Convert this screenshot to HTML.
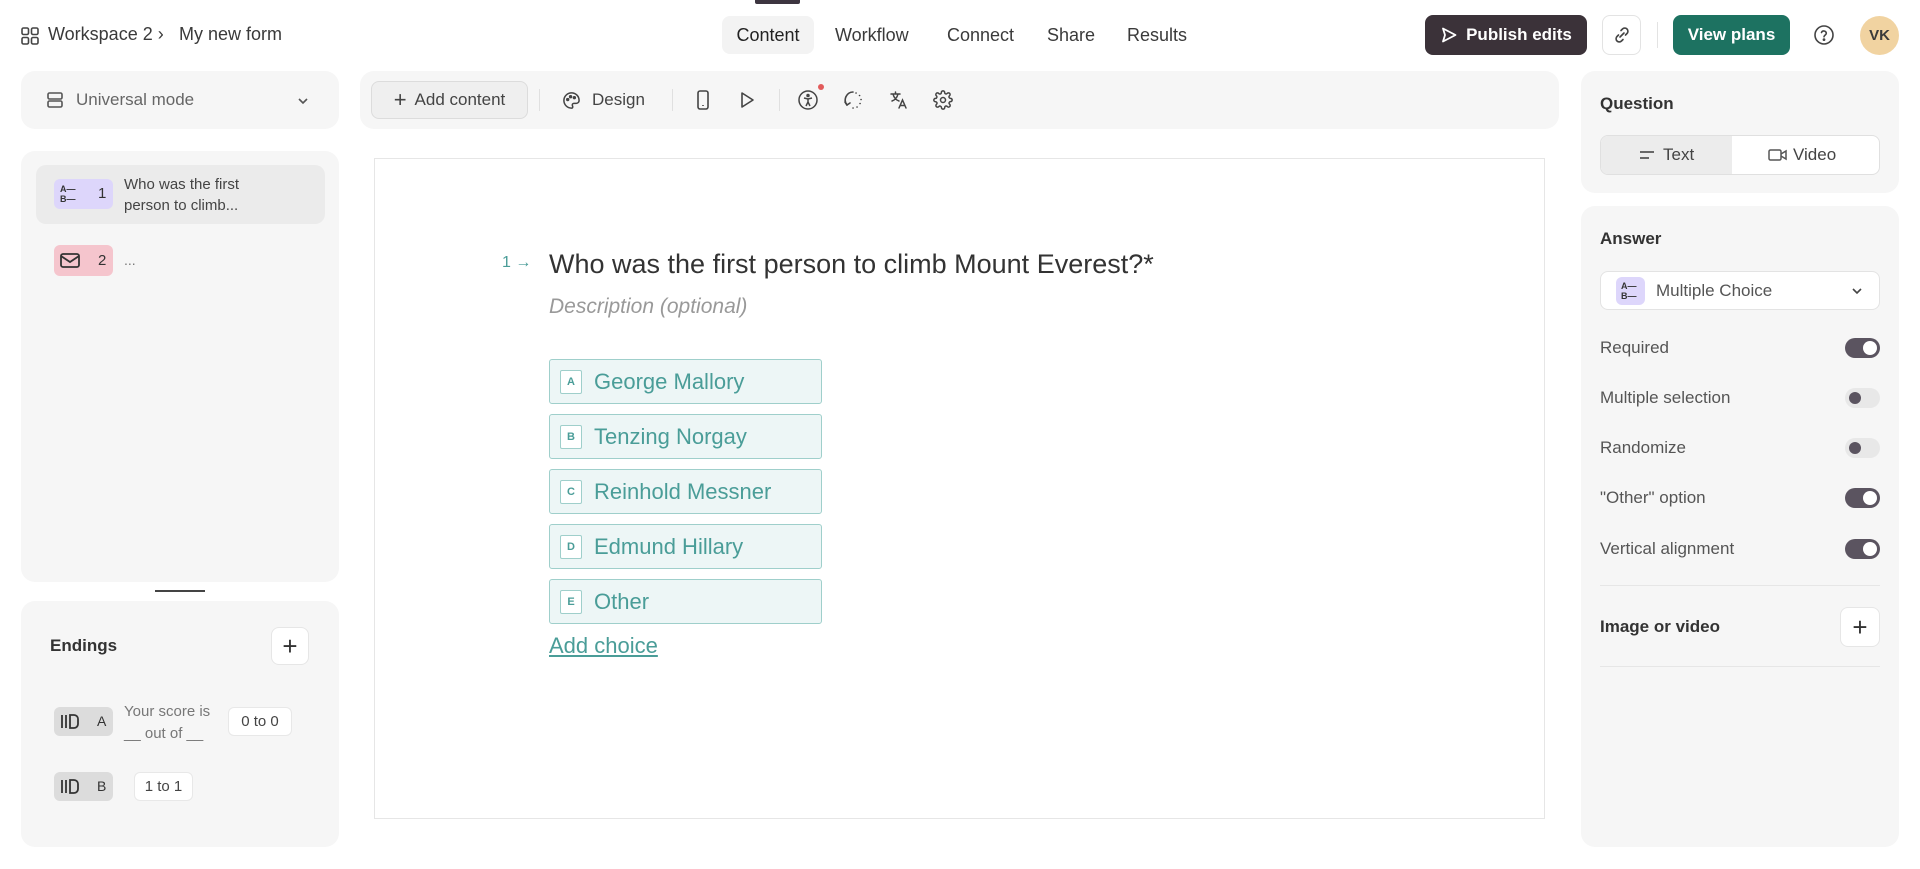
<!DOCTYPE html>
<html><head><meta charset="utf-8"><style>
*{box-sizing:border-box;margin:0;padding:0}
body{width:1920px;height:869px;background:#fff;font-family:"Liberation Sans",sans-serif;color:#3a3a3a;position:relative;overflow:hidden}
.a{position:absolute}
.panel{position:absolute;background:#f6f6f6;border-radius:14px}
.tab{position:absolute;top:16px;height:38px;line-height:38px;font-size:18px;color:#3a3a3a}
.btn{position:absolute;border-radius:8px;display:flex;align-items:center;justify-content:center;font-size:17px}
.ch{position:absolute;left:549px;width:273px;height:45px;background:#edf6f6;border:1px solid #9fcfcb;border-radius:3px;color:#4a9d98;font-size:22px;line-height:43px;padding-left:44px}
.ch b{position:absolute;left:10px;top:10px;width:22px;height:24px;background:#fff;border:1px solid #9fcfcb;border-radius:2px;font-size:11px;line-height:22px;text-align:center;color:#4a9d98;font-weight:bold}
.row{position:absolute;left:1600px;font-size:17px;color:#555}
.tg{position:absolute;left:1845px;width:35px;height:20px;border-radius:10px}
.on{background:#5b5460}.on:after{content:"";position:absolute;right:3px;top:3px;width:14px;height:14px;border-radius:50%;background:#fff}
.off{background:#e8e8e8}.off:after{content:"";position:absolute;left:4px;top:4px;width:12px;height:12px;border-radius:50%;background:#5b5460}
svg{display:block}
</style></head><body>
<svg class="a" style="left:21px;top:27px" width="18" height="18" viewBox="0 0 18 18" fill="none" stroke="#444" stroke-width="1.6"><rect x="1" y="1" width="6.5" height="6.5" rx="1.5"/><rect x="10.5" y="1" width="6.5" height="6.5" rx="1.5"/><rect x="1" y="10.5" width="6.5" height="6.5" rx="1.5"/><rect x="10.5" y="10.5" width="6.5" height="6.5" rx="1.5"/></svg>
<div class="a" style="left:48px;top:24px;font-size:18px;color:#3a3a3a">Workspace 2 ›</div>
<div class="a" style="left:179px;top:24px;font-size:18px;color:#3a3a3a">My new form</div>
<div class="a" style="left:755px;top:0;width:45px;height:4px;background:#3d3540;border-radius:0 0 2px 2px"></div>
<div class="tab" style="left:722px;width:92px;background:#f3f3f3;border-radius:8px;text-align:center;color:#222">Content</div>
<div class="tab" style="left:835px">Workflow</div>
<div class="tab" style="left:947px">Connect</div>
<div class="tab" style="left:1047px">Share</div>
<div class="tab" style="left:1127px">Results</div>
<div class="btn" style="left:1425px;top:15px;width:162px;height:40px;background:#3b3239;color:#fff;font-weight:bold">
<svg width="18" height="18" viewBox="0 0 18 18" fill="none" stroke="#fff" stroke-width="1.8" style="margin-right:8px"><path d="M3 2.5L15.5 9 3 15.5 5 9z" stroke-linejoin="round"/></svg>Publish edits</div>
<div class="btn" style="left:1602px;top:15px;width:39px;height:40px;border:1px solid #e3e3e3;background:#fff">
<svg width="18" height="18" viewBox="0 0 18 18" fill="none" stroke="#444" stroke-width="1.6" stroke-linecap="round"><path d="M8 4.5l1.5-1.5a3 3 0 014.5 4.5L12.5 9M10 13.5L8.5 15a3 3 0 01-4.5-4.5L5.5 9M7 11l4-4"/></svg></div>
<div class="a" style="left:1657px;top:22px;width:1px;height:26px;background:#e3e3e3"></div>
<div class="btn" style="left:1673px;top:15px;width:117px;height:40px;background:#1d7261;color:#fff;font-weight:bold">View plans</div>
<svg class="a" style="left:1813px;top:24px" width="22" height="22" viewBox="0 0 22 22" fill="none" stroke="#444" stroke-width="1.6"><circle cx="11" cy="11" r="9"/><path d="M8.5 8.5a2.5 2.5 0 014.8.8c0 1.7-2.3 2-2.3 3.5" stroke-linecap="round"/><circle cx="11" cy="15.6" r=".6" fill="#444"/></svg>
<div class="a" style="left:1860px;top:16px;width:39px;height:39px;border-radius:50%;background:#f1d3a1;font-size:15px;font-weight:bold;color:#3a3a3a;text-align:center;line-height:39px">VK</div>

<div class="panel" style="left:21px;top:71px;width:318px;height:58px"></div>
<svg class="a" style="left:46px;top:91px" width="18" height="18" viewBox="0 0 18 18" fill="none" stroke="#555" stroke-width="1.6"><rect x="2" y="2" width="14" height="6" rx="1.5"/><rect x="2" y="10" width="14" height="6" rx="1.5"/></svg>
<div class="a" style="left:76px;top:90px;font-size:17px;color:#666">Universal mode</div>
<svg class="a" style="left:296px;top:94px" width="14" height="14" viewBox="0 0 14 14" fill="none" stroke="#555" stroke-width="1.6"><path d="M3 5l4 4 4-4"/></svg>

<div class="panel" style="left:360px;top:71px;width:1199px;height:58px"></div>
<div class="btn" style="left:371px;top:81px;width:157px;height:38px;background:#efefef;border:1px solid #dcdcdc;color:#444"><span style="font-size:22px;margin-right:8px;font-weight:300">+</span>Add content</div>
<div class="a" style="left:539px;top:89px;width:1px;height:22px;background:#e0e0e0"></div>
<svg class="a" style="left:562px;top:91px" width="19" height="19" viewBox="0 0 20 20" fill="none" stroke="#444" stroke-width="1.6"><path d="M10 2a8 8 0 000 16c1.5 0 1.5-1.5 1-2.5s0-2.5 1.5-2.5H15a3 3 0 003-3C18 5.5 14.5 2 10 2z"/><circle cx="6" cy="9" r="1" fill="#444"/><circle cx="9" cy="6" r="1" fill="#444"/><circle cx="13" cy="7" r="1" fill="#444"/></svg>
<div class="a" style="left:592px;top:90px;font-size:17px;color:#444">Design</div>
<div class="a" style="left:672px;top:89px;width:1px;height:22px;background:#e0e0e0"></div>
<svg class="a" style="left:693px;top:89px" width="20" height="22" viewBox="0 0 20 22" fill="none" stroke="#444" stroke-width="1.6"><rect x="5" y="2" width="10" height="18" rx="2"/><path d="M10 16v1"/></svg>
<svg class="a" style="left:737px;top:90px" width="20" height="20" viewBox="0 0 20 20" fill="none" stroke="#444" stroke-width="1.6"><path d="M5 3l11 7-11 7z" stroke-linejoin="round"/></svg>
<div class="a" style="left:779px;top:89px;width:1px;height:22px;background:#e0e0e0"></div>
<svg class="a" style="left:797px;top:89px" width="22" height="22" viewBox="0 0 22 22" fill="none" stroke="#444" stroke-width="1.5"><circle cx="11" cy="11" r="9"/><circle cx="11" cy="6.5" r="1" fill="#444"/><path d="M7 9l4 1 4-1M11 10v3l-2 4M11 13l2 4"/></svg>
<div class="a" style="left:818px;top:84px;width:6px;height:6px;border-radius:50%;background:#e25b5b"></div>
<svg class="a" style="left:843px;top:90px" width="21" height="21" viewBox="0 0 21 21" fill="none" stroke="#444" stroke-width="1.6" stroke-linecap="round"><path d="M10 2a8 8 0 00-6 13" /><path d="M2 12l2 3 3-2"/><path d="M13 3l.1 0M16.5 5.5l.1 0M18 9.5l.1 0M17 13.5l.1 0M14 17l.1 0M10 18l.1 0"/></svg>
<svg class="a" style="left:889px;top:90px" width="20" height="20" viewBox="0 0 20 20" fill="none" stroke="#444" stroke-width="1.5" stroke-linecap="round"><path d="M2 4h9M6.5 2v2M4 4c1 4 3 6 6 7M9 4c-1 4-3 6-6 7M10 18l3.5-8 3.5 8M11.2 15.5h4.6"/></svg>
<svg class="a" style="left:933px;top:90px" width="20" height="20" viewBox="0 0 24 24" fill="none" stroke="#444" stroke-width="1.8"><circle cx="12" cy="12" r="3"/><path d="M19.4 15a1.7 1.7 0 00.3 1.8l.1.1a2 2 0 11-2.8 2.8l-.1-.1a1.7 1.7 0 00-1.8-.3 1.7 1.7 0 00-1 1.5V21a2 2 0 11-4 0v-.1a1.7 1.7 0 00-1.1-1.5 1.7 1.7 0 00-1.8.3l-.1.1a2 2 0 11-2.8-2.8l.1-.1a1.7 1.7 0 00.3-1.8 1.7 1.7 0 00-1.5-1H3a2 2 0 110-4h.1a1.7 1.7 0 001.5-1.1 1.7 1.7 0 00-.3-1.8l-.1-.1a2 2 0 112.8-2.8l.1.1a1.7 1.7 0 001.8.3H9a1.7 1.7 0 001-1.5V3a2 2 0 114 0v.1a1.7 1.7 0 001 1.5 1.7 1.7 0 001.8-.3l.1-.1a2 2 0 112.8 2.8l-.1.1a1.7 1.7 0 00-.3 1.8V9a1.7 1.7 0 001.5 1H21a2 2 0 110 4h-.1a1.7 1.7 0 00-1.5 1z"/></svg>

<div class="panel" style="left:1581px;top:71px;width:318px;height:122px"></div>
<div class="a" style="left:1600px;top:94px;font-size:17px;font-weight:bold;color:#333">Question</div>
<div class="a" style="left:1600px;top:135px;width:280px;height:40px;border:1px solid #e0e0e0;border-radius:8px;background:#fff;overflow:hidden">
<div class="a" style="left:0;top:0;width:131px;height:38px;background:#ececec"></div>
<svg class="a" style="left:38px;top:13px" width="16" height="12" viewBox="0 0 16 12" stroke="#555" stroke-width="1.8"><path d="M1 3h14M1 9h9"/></svg>
<div class="a" style="left:62px;top:9px;font-size:17px;color:#444">Text</div>
<svg class="a" style="left:167px;top:10px" width="20" height="18" viewBox="0 0 20 18" fill="none" stroke="#555" stroke-width="1.5"><rect x="1" y="4" width="12" height="10" rx="1.5"/><path d="M13 8l5-3v8l-5-3"/></svg>
<div class="a" style="left:192px;top:9px;font-size:17px;color:#444">Video</div>
</div>

<div class="panel" style="left:21px;top:151px;width:318px;height:431px"></div>
<div class="a" style="left:36px;top:165px;width:289px;height:59px;background:#ebebeb;border-radius:10px"></div>
<div class="a" style="left:54px;top:179px;width:59px;height:30px;background:#ddd6fb;border-radius:6px"></div>
<div class="a" style="left:60px;top:184px;font-size:9px;font-weight:bold;line-height:10px;color:#333">A—<br>B—</div>
<div class="a" style="left:98px;top:185px;font-size:15px;color:#333">1</div>
<div class="a" style="left:124px;top:174px;font-size:15px;line-height:21px;color:#444">Who was the first<br>person to climb...</div>
<div class="a" style="left:54px;top:245px;width:59px;height:31px;background:#f5c5cd;border-radius:6px"></div>
<svg class="a" style="left:59px;top:252px" width="22" height="17" viewBox="0 0 22 17" fill="none" stroke="#333" stroke-width="1.8"><rect x="2" y="2" width="18" height="13" rx="2"/><path d="M2 4l9 6 9-6"/></svg>
<div class="a" style="left:98px;top:252px;font-size:15px;color:#333">2</div>
<div class="a" style="left:124px;top:252px;font-size:14px;color:#777">...</div>
<div class="a" style="left:155px;top:590px;width:50px;height:2px;background:#444"></div>

<div class="panel" style="left:21px;top:601px;width:318px;height:246px"></div>
<div class="a" style="left:50px;top:636px;font-size:17px;font-weight:bold;color:#333">Endings</div>
<div class="btn" style="left:271px;top:627px;width:38px;height:38px;background:#fff;border:1px solid #e6e6e6;font-size:26px;font-weight:300;color:#333">+</div>
<div class="a" style="left:54px;top:707px;width:59px;height:29px;background:#dcdcdc;border-radius:6px"></div>
<svg class="a" style="left:60px;top:713px" width="20" height="17" viewBox="0 0 20 17" fill="none" stroke="#333" stroke-width="1.8"><path d="M2 2v13M6 2v13M10 2h4a4 4 0 014 4v5a4 4 0 01-4 4h-4z"/></svg>
<div class="a" style="left:97px;top:713px;font-size:14px;color:#333">A</div>
<div class="a" style="left:124px;top:701px;font-size:15px;line-height:22px;color:#777">Your score is<br>__ out of __</div>
<div class="a" style="left:228px;top:707px;width:64px;height:29px;background:#fff;border:1px solid #e8e8e8;border-radius:6px;font-size:15px;text-align:center;line-height:27px;color:#444">0 to 0</div>
<div class="a" style="left:54px;top:772px;width:59px;height:29px;background:#dcdcdc;border-radius:6px"></div>
<svg class="a" style="left:60px;top:778px" width="20" height="17" viewBox="0 0 20 17" fill="none" stroke="#333" stroke-width="1.8"><path d="M2 2v13M6 2v13M10 2h4a4 4 0 014 4v5a4 4 0 01-4 4h-4z"/></svg>
<div class="a" style="left:97px;top:778px;font-size:14px;color:#333">B</div>
<div class="a" style="left:134px;top:772px;width:59px;height:29px;background:#fff;border:1px solid #e8e8e8;border-radius:6px;font-size:15px;text-align:center;line-height:27px;color:#444">1 to 1</div>

<div class="a" style="left:374px;top:158px;width:1171px;height:661px;border:1px solid #e6e6e6;background:#fff"></div>
<div class="a" style="left:502px;top:254px;font-size:16px;color:#4a9d98">1 →</div>
<div class="a" style="left:549px;top:249px;font-size:27px;color:#333">Who was the first person to climb Mount Everest?*</div>
<div class="a" style="left:549px;top:295px;font-size:21px;font-style:italic;color:#999">Description (optional)</div>
<div class="ch" style="top:359px"><b>A</b>George Mallory</div>
<div class="ch" style="top:414px"><b>B</b>Tenzing Norgay</div>
<div class="ch" style="top:469px"><b>C</b>Reinhold Messner</div>
<div class="ch" style="top:524px"><b>D</b>Edmund Hillary</div>
<div class="ch" style="top:579px"><b>E</b>Other</div>
<div class="a" style="left:549px;top:633px;font-size:22px;color:#4a9d98;text-decoration:underline">Add choice</div>

<div class="panel" style="left:1581px;top:206px;width:318px;height:641px"></div>
<div class="a" style="left:1600px;top:229px;font-size:17px;font-weight:bold;color:#333">Answer</div>
<div class="a" style="left:1600px;top:271px;width:280px;height:39px;background:#fff;border:1px solid #e3e3e3;border-radius:8px"></div>
<div class="a" style="left:1616px;top:277px;width:29px;height:28px;background:#ddd6fb;border-radius:6px"></div>
<div class="a" style="left:1621px;top:281px;font-size:9px;font-weight:bold;line-height:10px;color:#333">A—<br>B—</div>
<div class="a" style="left:1656px;top:281px;font-size:17px;color:#555">Multiple Choice</div>
<svg class="a" style="left:1850px;top:284px" width="14" height="14" viewBox="0 0 14 14" fill="none" stroke="#444" stroke-width="1.6"><path d="M3 5l4 4 4-4"/></svg>
<div class="row" style="top:338px">Required</div><div class="tg on" style="top:338px"></div>
<div class="row" style="top:388px">Multiple selection</div><div class="tg off" style="top:388px"></div>
<div class="row" style="top:438px">Randomize</div><div class="tg off" style="top:438px"></div>
<div class="row" style="top:488px">"Other" option</div><div class="tg on" style="top:488px"></div>
<div class="row" style="top:539px">Vertical alignment</div><div class="tg on" style="top:539px"></div>
<div class="a" style="left:1600px;top:585px;width:280px;height:1px;background:#e6e6e6"></div>
<div class="a" style="left:1600px;top:617px;font-size:17px;font-weight:bold;color:#333">Image or video</div>
<div class="btn" style="left:1840px;top:607px;width:40px;height:40px;background:#fff;border:1px solid #e6e6e6;font-size:26px;font-weight:300;color:#333">+</div>
<div class="a" style="left:1600px;top:666px;width:280px;height:1px;background:#e6e6e6"></div>
</body></html>
